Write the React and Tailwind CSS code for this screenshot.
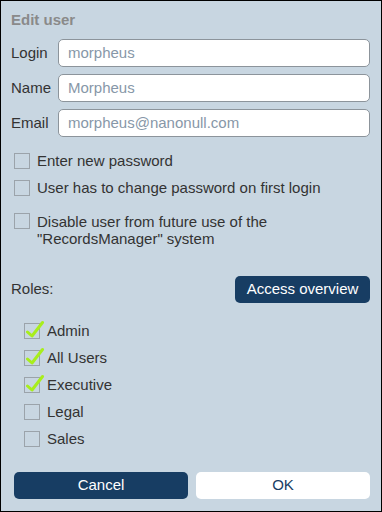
import React from "react";

function Box({ checked }) {
  return (
    <span className="relative block w-[16px] h-[16px] shrink-0 border border-[#9ba3aa]">
      {checked && (
        <svg
          className="absolute left-[1px] -top-[4px]"
          width="20"
          height="20"
          viewBox="0 0 20 20"
        >
          <path
            d="M1.5 12 L6 16 L16.5 2.5"
            fill="none"
            stroke="#a8ee1c"
            strokeWidth="3"
            strokeLinecap="round"
            strokeLinejoin="round"
          />
        </svg>
      )}
    </span>
  );
}

function Field({ label, value }) {
  return (
    <div className="flex items-center">
      <label className="w-[47px] text-[15px] text-[#333]">{label}</label>
      <div className="flex-1 h-[28px] rounded-[5px] border border-[#8c949b] bg-white px-[9px] flex items-center text-[15px] text-[#8797a8]">
        {value}
      </div>
    </div>
  );
}

export default function App() {
  const roles = [
    ["Admin", true],
    ["All Users", true],
    ["Executive", true],
    ["Legal", false],
    ["Sales", false],
  ];

  return (
    <div
      className="w-[382px] h-[512px] bg-[#c8d6e1] border border-black flex flex-col pl-[13px] pr-[11px] text-[#333]"
      style={{ fontFamily: '"Liberation Sans", Arial, sans-serif' }}
    >
      {/* Title */}
      <h1 className="mt-[9px] -ml-[3px] text-[15px] font-bold text-[#8a8a8a] leading-[20px]">Edit user</h1>

      {/* Fields */}
      <div className="mt-[9px] -ml-[3px] flex flex-col gap-[7px]">
        <Field label="Login" value="morpheus" />
        <Field label="Name" value="Morpheus" />
        <Field label="Email" value="morpheus@nanonull.com" />
      </div>

      {/* Options */}
      <div className="mt-[15px] flex flex-col text-[15px] leading-[17px]">
        <div className="flex items-center gap-[7px]">
          <Box />
          <span>Enter new password</span>
        </div>
        <div className="mt-[10px] flex items-center gap-[7px]">
          <Box />
          <span>User has to change password on first login</span>
        </div>
        <div className="mt-[17px] flex items-start gap-[7px]">
          <Box />
          <span>
            Disable user from future use of the
            <br />
            "RecordsManager" system
          </span>
        </div>
      </div>

      {/* Roles */}
      <div className="mt-[29px] -ml-[3px] flex items-center justify-between">
        <span className="text-[15px]">Roles:</span>
        <button className="w-[135px] h-[27px] rounded-[5px] bg-[#173d63] text-white text-[15px]">
          Access overview
        </button>
      </div>

      <div className="mt-[20px] ml-[10px] flex flex-col gap-[11px] text-[15px] leading-[16px]">
        {roles.map(([name, checked]) => (
          <div key={name} className="flex items-center gap-[7px]">
            <Box checked={checked} />
            <span>{name}</span>
          </div>
        ))}
      </div>

      {/* Actions */}
      <div className="mt-auto mb-[12px] flex gap-[8px]">
        <button className="flex-1 h-[27px] rounded-[5px] bg-[#173d63] text-white text-[15px]">Cancel</button>
        <button className="flex-1 h-[27px] rounded-[5px] bg-white text-[#173d63] text-[15px]">OK</button>
      </div>
    </div>
  );
}
